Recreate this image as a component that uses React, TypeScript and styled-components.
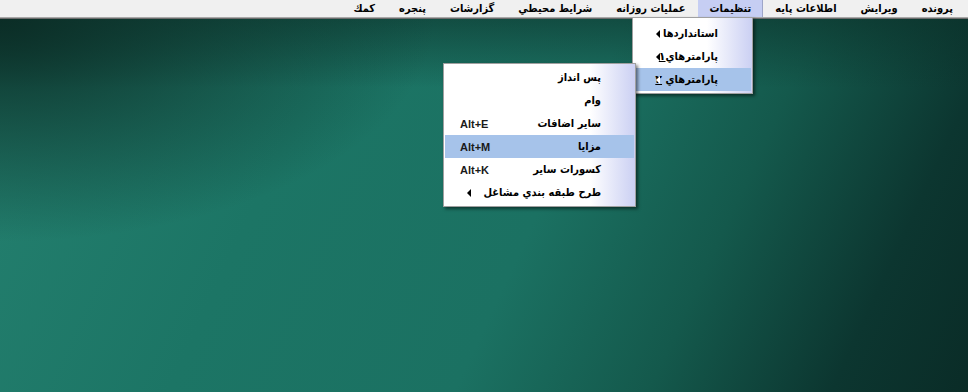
import React from 'react';
import styled, { createGlobalStyle } from 'styled-components';

const GlobalStyle = createGlobalStyle`
  html, body {
    margin: 0;
    padding: 0;
    width: 968px;
    height: 392px;
    overflow: hidden;
  }
  body {
    font-family: Tahoma, "DejaVu Sans Condensed", "DejaVu Sans", sans-serif;
    color: #000;
  }
`;

const Screen = styled.div`
  position: relative;
  width: 968px;
  height: 392px;
  display: flex;
  flex-direction: column;
`;

const MenuBar = styled.div`
  height: 17px;
  display: flex;
  flex-direction: row;
  direction: rtl;
  padding-right: 3px;
  background-color: #f0f0f0;
  border-bottom: 1px solid #a8a8a8;
  box-shadow: 0 1px 0 #6c6c6c;
  z-index: 1;
`;

type BarItemProps = {
  $active?: boolean;
};

const BarItem = styled.div<BarItemProps>`
  display: flex;
  align-items: center;
  padding: 0 12px;
  font-size: 11px;
  font-weight: bold;
  white-space: nowrap;
  ${({ $active }) =>
    $active &&
    `
    background-color: #c6cef3;
    box-shadow: inset -1px 0 0 #9ea6c8;
  `}
`;

const Desktop = styled.div`
  flex: 1 1 auto;
  background:
    radial-gradient(ellipse 45% 60% at 0% 0%, #0b2d26 0%, rgba(11, 45, 38, 0) 100%),
    linear-gradient(to bottom, rgba(10, 45, 38, 0.55) 0, rgba(10, 45, 38, 0) 70px),
    linear-gradient(115deg, #24806f 0%, #1c7565 30%, #1b7162 55%, #14594c 72%, #0c3630 88%, #0a2c27 100%);
`;

type PopupProps = {
  $left: number;
  $top: number;
  $width: number;
  $padTop: number;
};

const Popup = styled.div<PopupProps>`
  position: absolute;
  left: ${({ $left }) => $left}px;
  top: ${({ $top }) => $top}px;
  width: ${({ $width }) => $width}px;
  display: flex;
  flex-direction: column;
  padding: ${({ $padTop }) => $padTop}px 1px 2px 1px;
  border: 1px solid #a0a0a0;
  background: linear-gradient(to left, #cbd0f3 0, #ffffff 45px);
  box-shadow: 2px 2px 3px rgba(0, 0, 0, 0.5);
  z-index: 2;
`;

type RowProps = {
  $hot?: boolean;
};

const Row = styled.div<RowProps>`
  position: relative;
  height: 23px;
  display: flex;
  flex-direction: row;
  direction: rtl;
  align-items: center;
  justify-content: space-between;
  padding: 0 33px 0 15px;
  background-color: ${({ $hot }) => ($hot ? '#a6c3ea' : 'transparent')};
`;

const Label = styled.span`
  font-size: 11px;
  font-weight: bold;
  white-space: nowrap;
`;

// persian digits are missing from the condensed face
const Mnemonic = styled.span`
  font-family: "DejaVu Sans", sans-serif;
  text-decoration: underline;
`;

const Shortcut = styled.span`
  direction: ltr;
  font-family: "Liberation Sans", Arial, sans-serif;
  font-size: 11px;
  font-weight: bold;
  color: #1a1a1a;
`;

type ArrowProps = {
  $light?: boolean;
};

const Arrow = styled.span<ArrowProps>`
  position: absolute;
  left: 22px;
  top: 50%;
  margin-top: -4px;
  width: 0;
  height: 0;
  border-top: 4px solid transparent;
  border-bottom: 4px solid transparent;
  border-right: 4px solid ${({ $light }) => ($light ? '#ffffff' : '#000000')};
`;

const barItems = [
  'پرونده',
  'ويرايش',
  'اطلاعات پايه',
  'تنظيمات',
  'عمليات روزانه',
  'شرايط محيطي',
  'گزارشات',
  'پنجره',
  'كمك',
];

const App: React.FC = () => (
  <>
    <GlobalStyle />
    <Screen>
      <MenuBar>
        {barItems.map((item) => (
          <BarItem key={item} $active={item === 'تنظيمات'}>
            {item}
          </BarItem>
        ))}
      </MenuBar>
      <Desktop />

      <Popup $left={632} $top={17} $width={117} $padTop={4}>
        <Row>
          <Label>استانداردها</Label>
          <Arrow />
        </Row>
        <Row>
          <Label>
            پارامترهاي<Mnemonic>۱</Mnemonic>
          </Label>
          <Arrow />
        </Row>
        <Row $hot>
          <Label>
            پارامترهاي <Mnemonic>۲</Mnemonic>
          </Label>
          <Arrow $light />
        </Row>
      </Popup>

      <Popup $left={443} $top={63} $width={189} $padTop={2}>
        <Row>
          <Label>پس انداز</Label>
        </Row>
        <Row>
          <Label>وام</Label>
        </Row>
        <Row>
          <Label>ساير اضافات</Label>
          <Shortcut>Alt+E</Shortcut>
        </Row>
        <Row $hot>
          <Label>مزايا</Label>
          <Shortcut>Alt+M</Shortcut>
        </Row>
        <Row>
          <Label>كسورات ساير</Label>
          <Shortcut>Alt+K</Shortcut>
        </Row>
        <Row>
          <Label>طرح طبقه بندي مشاغل</Label>
          <Arrow />
        </Row>
      </Popup>
    </Screen>
  </>
);

export default App;
